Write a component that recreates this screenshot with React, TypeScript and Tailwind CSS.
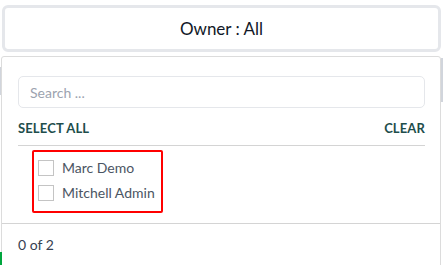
import { useState } from "react";

const OWNERS = ["Marc Demo", "Mitchell Admin"];

export default function App() {
  const [checked, setChecked] = useState<string[]>([]);

  function toggle(name: string) {
    setChecked((c) =>
      c.includes(name) ? c.filter((n) => n !== name) : [...c, name]
    );
  }

  return (
    <div
      className="relative w-[443px] h-[265px] overflow-hidden bg-white"
      style={{ fontFamily: "Lato, 'Noto Sans', sans-serif" }}
    >
      {/* bits of the page behind the dropdown */}
      <div className="absolute left-0 top-[67px] w-px h-[28px] bg-gray-300" />
      <div className="absolute left-0 top-[252px] w-[2px] h-[13px] bg-green-600" />
      <div className="absolute right-0 top-[58px] w-[2px] h-[44px] bg-gray-300" />

      <div className="px-[2px] pt-[5px]">
        <button className="w-full h-[47px] rounded-md border-[3px] border-[#e5e7eb] bg-white flex items-center justify-center text-[17px] text-[#111827]">
          Owner : All
        </button>
      </div>

      <div className="mt-[4px] ml-px mr-[2px] border border-[#dcdcdc] rounded-t-[3px] bg-white">
        <div className="pl-[16px] pr-[15px] pt-[19px]">
          <input
            placeholder="Search ..."
            className="w-full h-[32px] rounded-[5px] border border-[#e5e7eb] px-[11px] text-[14px] text-gray-700 placeholder:text-[#9ca3af] outline-none"
          />
          <div className="flex justify-between items-center mt-[11px] text-[13px] font-bold text-[#1e4d4b] tracking-[0.01em]">
            <button>SELECT ALL</button>
            <button>CLEAR</button>
          </div>
          <div className="mt-[6px] border-t border-[#d4d4d4]" />
          <div className="mt-[4px] ml-[14px] w-[131px] border-[2px] border-[#ff0000] rounded-[2px] pl-[4px] pt-[6px] pb-[8px] flex flex-col gap-[5px]">
            {OWNERS.map((name) => (
              <label
                key={name}
                className="flex items-center gap-[8px] h-[20px] text-[14px] text-[#4b5563] cursor-pointer"
              >
                <span
                  onClick={() => toggle(name)}
                  className={`w-[16px] h-[16px] border ${
                    checked.includes(name)
                      ? "border-[#1e4d4b] bg-[#1e4d4b]"
                      : "border-[#c4c4c4] bg-white"
                  }`}
                />
                {name}
              </label>
            ))}
          </div>
        </div>
        <div className="mt-[10px] border-t border-[#d4d4d4] px-[16px] pt-[11px] pb-[12px] text-[14px] leading-[20px] text-[#374151]">
          {checked.length} of {OWNERS.length}
        </div>
      </div>
    </div>
  );
}
